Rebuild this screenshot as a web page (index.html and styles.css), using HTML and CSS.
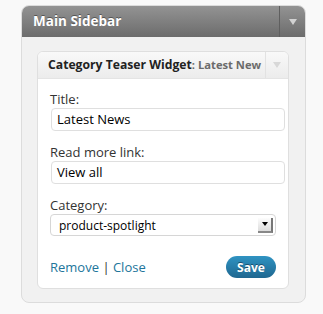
FILE: index.html
```html
<!DOCTYPE html>
<html>
<head>
<meta charset="utf-8">
<link rel="stylesheet" href="styles.css">
</head>
<body>
<div class="sidebar">
  <div class="sidebar-head">
    <h3 class="sidebar-title">Main Sidebar</h3>
    <div class="sidebar-toggle"><span class="tri tri-light"></span></div>
  </div>
  <div class="sidebar-body">
    <div class="widget">
      <div class="widget-head">
        <h4 class="widget-title">Category Teaser Widget<span class="in-title">: Latest New</span></h4>
        <div class="widget-toggle"><span class="tri tri-pale"></span></div>
      </div>
      <div class="widget-body">
        <div class="field">
          <label class="field-label">Title:</label>
          <div class="text-input">Latest News</div>
        </div>
        <div class="field">
          <label class="field-label">Read more link:</label>
          <div class="text-input">View all</div>
        </div>
        <div class="field">
          <label class="field-label">Category:</label>
          <div class="select">
            <span class="select-value">product-spotlight</span>
            <span class="select-btn"><span class="tri tri-black"></span></span>
          </div>
        </div>
        <div class="widget-foot">
          <div class="links"><a class="link">Remove</a> <span class="sep">|</span> <a class="link">Close</a></div>
          <button class="save">Save</button>
        </div>
      </div>
    </div>
  </div>
</div>
</body>
</html>
```

FILE: styles.css
```css
* { box-sizing: border-box; }
body {
  margin: 0;
  background: #f9f9f9;
  font-family: "Open Sans", "DejaVu Sans", sans-serif;
  font-size: 13px;
  color: #333;
}
.sidebar {
  margin: 5px 0 0 21px;
  width: 285px;
  height: 298px;
  background: #f1f1f1;
  border: 1px solid #dcdcdc;
  border-radius: 8px;
  overflow: hidden;
}
.sidebar-head {
  display: flex;
  height: 31px;
  background: linear-gradient(#939393, #6c6c6c);
}
.sidebar-title {
  flex: 1;
  margin: 0;
  padding: 0 0 0 11px;
  line-height: 30px;
  font-size: 13.5px;
  font-weight: bold;
  color: #fff;
  text-shadow: 0 -1px 0 #555;
}
.sidebar-toggle {
  width: 26px;
  border-left: 1px solid #5f5f5f;
  display: flex;
  align-items: center;
  justify-content: center;
}
.tri {
  width: 0;
  height: 0;
  border-left: 4px solid transparent;
  border-right: 4px solid transparent;
}
.tri-light { border-top: 6px solid #d2d2d2; margin-left: 1px; }
.tri-pale { border-top: 6px solid #d8d8d8; }
.tri-black { border-left-width: 3px; border-right-width: 3px; border-top: 4px solid #000; }
.sidebar-body {
  padding: 14px 16px 0 15px;
}
.widget {
  width: 252px;
  border: 1px solid #dfdfdf;
  border-radius: 6px;
  background: #fff;
  overflow: hidden;
}
.widget-head {
  display: flex;
  height: 27px;
  background: linear-gradient(#f9f9f9, #ececec);
  border-bottom: 1px solid #e4e4e4;
}
.widget-title {
  flex: 1;
  margin: 0;
  padding-left: 10px;
  line-height: 26px;
  font-size: 12.2px;
  font-weight: bold;
  color: #222;
  white-space: nowrap;
  overflow: hidden;
}
.in-title {
  color: #6b6b6b;
  font-size: 11.2px;
}
.widget-toggle {
  width: 23px;
  border-left: 1px solid #e2e2e2;
  display: flex;
  align-items: center;
  justify-content: center;
}
.widget-body {
  padding: 12px 3px 10px 12px;
}
.field {
  margin-bottom: 13px;
}
.field-label {
  display: block;
  line-height: 16px;
  margin-bottom: 1px;
  color: #333;
}
.text-input {
  height: 23px;
  border: 1px solid #dfdfdf;
  border-radius: 4px;
  padding: 0 5px;
  line-height: 21px;
  color: #000;
  margin-left: 1px;
}
.select {
  display: flex;
  align-items: center;
  width: 226px;
  height: 22px;
  border: 1px solid #d6d6d6;
  border-radius: 4px;
  padding: 0 2px 0 8px;
  color: #000;
}
.select-value {
  flex: 1;
  font-size: 12px;
}
.select-btn {
  width: 15px;
  height: 15px;
  display: flex;
  align-items: center;
  justify-content: center;
  background: linear-gradient(#fdfdfd, #dcdcdc);
  border-right: 2px solid #777;
  border-bottom: 2px solid #888;
}
.widget-foot {
  display: flex;
  justify-content: space-between;
  align-items: center;
  padding-right: 9px;
  margin-top: 20px;
}
.link {
  color: #21759b;
}
.sep { color: #333; }
.save {
  width: 50px;
  height: 22px;
  border: 0;
  border-radius: 11px;
  background: linear-gradient(#2f93c2, #1f6790);
  color: #fff;
  font-family: "Open Sans", "DejaVu Sans", sans-serif;
  font-weight: bold;
  font-size: 12px;
  text-shadow: 0 -1px 0 #1a4f6e;
  padding: 0;
}
```
